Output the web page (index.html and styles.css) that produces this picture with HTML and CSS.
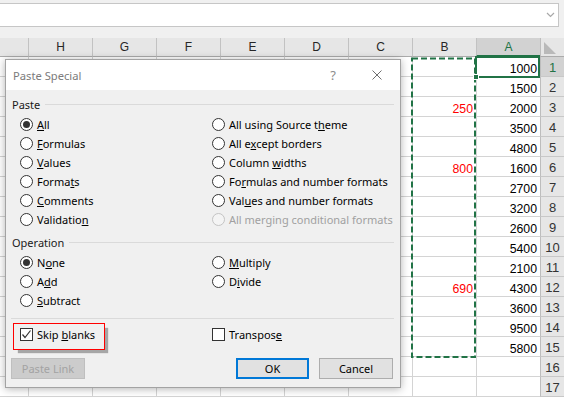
FILE: index.html
```html
<!DOCTYPE html>
<html lang="en">
<head>
  <meta charset="UTF-8" />
  <meta name="viewport" content="width=device-width, initial-scale=1.0"/>
  <title>Paste Special</title>
  <link rel="stylesheet" href="styles.css">
</head>
<body>
  <div class="window">
    <div class="formula-bar">
      <div class="formula-input">
        <svg class="chevron" width="9" height="6" viewBox="0 0 9 6"><path d="M1 1 L4.5 4.5 L8 1" fill="none" stroke="#a8a8a8" stroke-width="1.2"/></svg>
      </div>
    </div>

    <div class="sheet">
      <div class="row head">
        <div class="c edge"></div>
        <div class="c">H</div>
        <div class="c">G</div>
        <div class="c">F</div>
        <div class="c">E</div>
        <div class="c">D</div>
        <div class="c">C</div>
        <div class="c">B</div>
        <div class="c sel">A</div>
        <div class="rh corner"><svg width="12" height="12" viewBox="0 0 12 12"><path d="M0 0V12H12Z" fill="#b9b9b9"/></svg></div>
      </div>
      <div class="row"><div class="c edge"></div><div class="c"></div><div class="c"></div><div class="c"></div><div class="c"></div><div class="c"></div><div class="c"></div><div class="c"></div><div class="c">1000</div><div class="rh sel">1</div></div>
      <div class="row"><div class="c edge"></div><div class="c"></div><div class="c"></div><div class="c"></div><div class="c"></div><div class="c"></div><div class="c"></div><div class="c"></div><div class="c">1500</div><div class="rh">2</div></div>
      <div class="row"><div class="c edge"></div><div class="c"></div><div class="c"></div><div class="c"></div><div class="c"></div><div class="c"></div><div class="c"></div><div class="c red">250</div><div class="c">2000</div><div class="rh">3</div></div>
      <div class="row"><div class="c edge"></div><div class="c"></div><div class="c"></div><div class="c"></div><div class="c"></div><div class="c"></div><div class="c"></div><div class="c"></div><div class="c">3500</div><div class="rh">4</div></div>
      <div class="row"><div class="c edge"></div><div class="c"></div><div class="c"></div><div class="c"></div><div class="c"></div><div class="c"></div><div class="c"></div><div class="c"></div><div class="c">4800</div><div class="rh">5</div></div>
      <div class="row"><div class="c edge"></div><div class="c"></div><div class="c"></div><div class="c"></div><div class="c"></div><div class="c"></div><div class="c"></div><div class="c red">800</div><div class="c">1600</div><div class="rh">6</div></div>
      <div class="row"><div class="c edge"></div><div class="c"></div><div class="c"></div><div class="c"></div><div class="c"></div><div class="c"></div><div class="c"></div><div class="c"></div><div class="c">2700</div><div class="rh">7</div></div>
      <div class="row"><div class="c edge"></div><div class="c"></div><div class="c"></div><div class="c"></div><div class="c"></div><div class="c"></div><div class="c"></div><div class="c"></div><div class="c">3200</div><div class="rh">8</div></div>
      <div class="row"><div class="c edge"></div><div class="c"></div><div class="c"></div><div class="c"></div><div class="c"></div><div class="c"></div><div class="c"></div><div class="c"></div><div class="c">2600</div><div class="rh">9</div></div>
      <div class="row"><div class="c edge"></div><div class="c"></div><div class="c"></div><div class="c"></div><div class="c"></div><div class="c"></div><div class="c"></div><div class="c"></div><div class="c">5400</div><div class="rh">10</div></div>
      <div class="row"><div class="c edge"></div><div class="c"></div><div class="c"></div><div class="c"></div><div class="c"></div><div class="c"></div><div class="c"></div><div class="c"></div><div class="c">2100</div><div class="rh">11</div></div>
      <div class="row"><div class="c edge"></div><div class="c"></div><div class="c"></div><div class="c"></div><div class="c"></div><div class="c"></div><div class="c"></div><div class="c red">690</div><div class="c">4300</div><div class="rh">12</div></div>
      <div class="row"><div class="c edge"></div><div class="c"></div><div class="c"></div><div class="c"></div><div class="c"></div><div class="c"></div><div class="c"></div><div class="c"></div><div class="c">3600</div><div class="rh">13</div></div>
      <div class="row"><div class="c edge"></div><div class="c"></div><div class="c"></div><div class="c"></div><div class="c"></div><div class="c"></div><div class="c"></div><div class="c"></div><div class="c">9500</div><div class="rh">14</div></div>
      <div class="row"><div class="c edge"></div><div class="c"></div><div class="c"></div><div class="c"></div><div class="c"></div><div class="c"></div><div class="c"></div><div class="c"></div><div class="c">5800</div><div class="rh">15</div></div>
      <div class="row"><div class="c edge"></div><div class="c"></div><div class="c"></div><div class="c"></div><div class="c"></div><div class="c"></div><div class="c"></div><div class="c"></div><div class="c"></div><div class="rh">16</div></div>
      <div class="row"><div class="c edge"></div><div class="c"></div><div class="c"></div><div class="c"></div><div class="c"></div><div class="c"></div><div class="c"></div><div class="c"></div><div class="c"></div><div class="rh">17</div></div>

      <!-- copy marquee around B1:B15 -->
      <svg class="ants" width="68" height="304" viewBox="0 0 68 304">
        <rect x="2" y="2.5" width="63" height="298.5" fill="none" stroke="#217346" stroke-width="2" stroke-dasharray="6 3"/>
      </svg>
      <div class="active-cell"><span class="handle"></span></div>
    </div>

    <div class="dialog">
      <div class="dlg-title">
        <span>Paste Special</span>
        <span class="dlg-help">?</span>
        <span class="dlg-close">
          <svg width="10" height="10" viewBox="0 0 10 10"><path d="M0.5 0.5 L9.5 9.5 M9.5 0.5 L0.5 9.5" stroke="#6e6e6e" stroke-width="1"/></svg>
        </span>
      </div>
      <div class="dlg-body">
        <div class="group-label"><span>Paste</span><i></i></div>
        <div class="options paste">
          <label class="opt"><span class="radio on"></span><span><u>A</u>ll</span></label>
          <label class="opt"><span class="radio"></span><span><u>F</u>ormulas</span></label>
          <label class="opt"><span class="radio"></span><span><u>V</u>alues</span></label>
          <label class="opt"><span class="radio"></span><span>Forma<u>t</u>s</span></label>
          <label class="opt"><span class="radio"></span><span><u>C</u>omments</span></label>
          <label class="opt"><span class="radio"></span><span>Validatio<u>n</u></span></label>
          <label class="opt"><span class="radio"></span><span>All using Source t<u>h</u>eme</span></label>
          <label class="opt"><span class="radio"></span><span>All e<u>x</u>cept borders</span></label>
          <label class="opt"><span class="radio"></span><span>Column <u>w</u>idths</span></label>
          <label class="opt"><span class="radio"></span><span>Fo<u>r</u>mulas and number formats</span></label>
          <label class="opt"><span class="radio"></span><span>Val<u>u</u>es and number formats</span></label>
          <label class="opt disabled"><span class="radio"></span><span>All merging conditional formats</span></label>
        </div>

        <div class="group-label op"><span>Operation</span><i></i></div>
        <div class="options ops">
          <label class="opt"><span class="radio on"></span><span>N<u>o</u>ne</span></label>
          <label class="opt"><span class="radio"></span><span>A<u>d</u>d</span></label>
          <label class="opt"><span class="radio"></span><span><u>S</u>ubtract</span></label>
          <label class="opt"><span class="radio"></span><span><u>M</u>ultiply</span></label>
          <label class="opt"><span class="radio"></span><span>D<u>i</u>vide</span></label>
        </div>

        <div class="sep"></div>

        <div class="checks">
          <label class="opt marked">
            <span class="check"><svg width="11" height="11" viewBox="0 0 11 11"><path d="M1.5 5.5 L4 8.5 L9.5 1.5" fill="none" stroke="#333" stroke-width="1.2"/></svg></span>
            <span>Skip <u>b</u>lanks</span>
          </label>
          <label class="opt"><span class="check"></span><span>Transpos<u>e</u></span></label>
        </div>

        <div class="buttons">
          <button class="btn off">Paste Link</button>
          <button class="btn ok">OK</button>
          <button class="btn">Cancel</button>
        </div>
      </div>
    </div>
  </div>
</body>
</html>
```

FILE: styles.css
```css
* {
  box-sizing: border-box;
}

body {
  margin: 0;
  font-family: "Liberation Sans", Arial, sans-serif;
  background: #ffffff;
}

.window {
  position: relative;
  width: 564px;
  height: 398px;
  overflow: hidden;
  background: #ffffff;
}

/* formula bar */
.formula-bar {
  height: 38px;
  padding-top: 3px;
  background: #f0f0f0;
}

.formula-input {
  width: 560px;
  height: 24px;
  margin-left: -1px;
  background: #ffffff;
  border: 1px solid #c6c6c6;
  display: flex;
  align-items: center;
  justify-content: flex-end;
  padding-right: 3px;
}

/* sheet grid */
.sheet {
  position: relative;
}

.row {
  display: grid;
  grid-template-columns: 28px repeat(8, 64px) 24px;
  height: 20px;
}

.c {
  border-left: 1px solid #d4d4d4;
  border-bottom: 1px solid #d4d4d4;
  display: flex;
  align-items: flex-end;
  justify-content: flex-end;
  padding: 0 3px 1px 0;
  font-size: 12.3px;
  line-height: 1;
  color: #000000;
  white-space: nowrap;
}

.c.edge {
  border-left: none;
}

.c.red {
  color: #ff0000;
}

.row.head {
  height: 19px;
  background: #e6e6e6;
}

.head .c {
  border-left-color: #c2c2c2;
  border-bottom-color: #ababab;
  align-items: center;
  justify-content: center;
  padding: 0;
  font-size: 12px;
  color: #262626;
}

.head .c.sel {
  background: #d2d2d2;
  color: #217346;
  border-bottom: 2px solid #217346;
}

.rh {
  border-left: 1px solid #bdbdbd;
  border-bottom: 1px solid #c8c8c8;
  background: #e6e6e6;
  display: flex;
  align-items: flex-end;
  justify-content: center;
  padding-bottom: 2px;
  font-size: 13px;
  line-height: 1;
  color: #333333;
}

.rh.sel {
  background: #d2d2d2;
  color: #217346;
}

.head .rh.corner {
  border-bottom-color: #ababab;
  align-items: flex-start;
  justify-content: flex-start;
  padding: 4px 0 0 3px;
}

.ants {
  position: absolute;
  left: 410px;
  top: 18px;
}

.active-cell {
  position: absolute;
  left: 475px;
  top: 18px;
  width: 65px;
  height: 22px;
  border: 2px solid #217346;
}

.handle {
  position: absolute;
  left: -4px;
  bottom: -4px;
  width: 6px;
  height: 6px;
  background: #217346;
  border: 1px solid #ffffff;
}

/* dialog */
.dialog {
  position: absolute;
  left: 5px;
  top: 59px;
  width: 396px;
  height: 329px;
  background: #f0f0f0;
  border: 1px solid #a3a3a3;
  box-shadow: 0 1px 8px rgba(0, 0, 0, 0.3);
  font-family: "Noto Sans", "Open Sans", sans-serif;
  font-size: 11px;
  color: #000000;
}

.dlg-title {
  height: 30px;
  background: #ffffff;
  display: flex;
  align-items: center;
  padding-left: 7px;
  font-size: 11.2px;
  color: #7b7b7b;
}

.dlg-help {
  margin-left: auto;
  margin-right: 11px;
  width: 20px;
  text-align: center;
  font-size: 13px;
  color: #8c8c8c;
}

.dlg-close {
  width: 46px;
  height: 30px;
  display: flex;
  align-items: center;
  justify-content: center;
}

.dlg-body {
  padding: 0 6px;
}

.group-label {
  display: flex;
  align-items: center;
  height: 19px;
  margin-top: 5px;
  color: #1a1a1a;
}

.group-label.op {
  margin-top: 4px;
}

.group-label i {
  flex: 1;
  height: 1px;
  margin-left: 5px;
  background: #dadada;
}

.options {
  display: grid;
  grid-auto-flow: column;
  grid-template-columns: 192px 1fr;
  padding-left: 8px;
  margin-top: 1px;
}

.options.paste {
  grid-template-rows: repeat(6, 19px);
}

.options.ops {
  grid-template-rows: repeat(3, 19px);
}

.opt {
  display: flex;
  align-items: center;
  gap: 4px;
  white-space: nowrap;
  position: relative;
}

.radio {
  flex: none;
  position: relative;
  width: 13px;
  height: 13px;
  border: 1px solid #333333;
  border-radius: 50%;
  background: #ffffff;
}

.radio.on::after {
  content: "";
  position: absolute;
  inset: 2px;
  border-radius: 50%;
  background: #333333;
}

.opt.disabled {
  color: #a0a0a0;
}

.opt.disabled .radio {
  border-color: #c4c4c4;
  background: #f4f4f4;
}

.sep {
  height: 1px;
  margin: 8px 0 0 -1px;
  background: #dadada;
}

.checks {
  display: grid;
  grid-template-columns: 192px 1fr;
  height: 20px;
  margin-top: 5px;
  padding-left: 8px;
}

.check {
  flex: none;
  width: 13px;
  height: 13px;
  border: 1px solid #333333;
  background: #ffffff;
  display: flex;
  align-items: center;
  justify-content: center;
}

.opt.marked::before {
  content: "";
  position: absolute;
  left: -7px;
  top: -1px;
  width: 90px;
  height: 25px;
  border: 1px solid #ff0000;
  box-shadow: 4px 4px 1px -1px #a6a6a6;
}

.buttons {
  display: flex;
  gap: 10px;
  height: 21px;
  margin: 14px 1px 0 -1px;
}

.btn {
  height: 21px;
  width: 74px;
  padding: 0;
  border: 1px solid #adadad;
  background: #e1e1e1;
  font: inherit;
  color: #000000;
}

.btn.ok {
  width: 73px;
  margin-left: auto;
  border: 2px solid #0078d7;
}

.btn.off {
  background: #cccccc;
  border-color: #bfbfbf;
  color: #a3a3a3;
}
```
